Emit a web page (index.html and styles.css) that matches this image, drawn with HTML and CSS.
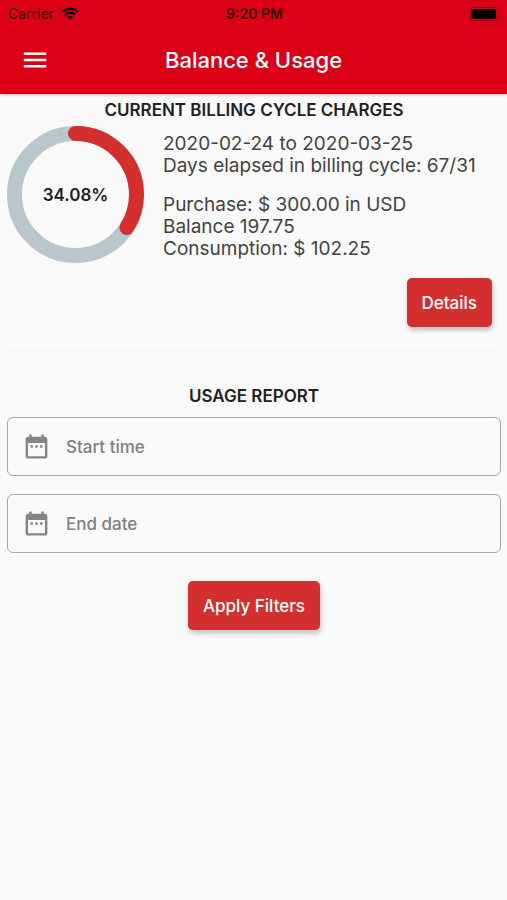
FILE: index.html
```html
<!DOCTYPE html>
<html lang="en">
<head>
    <meta charset="UTF-8">
    <meta name="viewport" content="width=device-width, initial-scale=1.0">
    <title>Balance &amp; Usage</title>
    <link rel="stylesheet" href="styles.css">
</head>
<body>
    <header class="header">
        <div class="status-bar">
            <div class="carrier">
                <span>Carrier</span>
                <svg width="18" height="13" viewBox="0 0 17 12" fill="none" stroke="#1a0003" stroke-width="2.3">
                    <path d="M1 4.6a10.6 10.6 0 0 1 15 0"/>
                    <path d="M3.7 7.3a6.8 6.8 0 0 1 9.6 0"/>
                    <path d="M8.5 12L5.8 9.3a3.8 3.8 0 0 1 5.4 0z" fill="#1a0003" stroke="none"/>
                </svg>
            </div>
            <span class="time">9:20 PM</span>
            <div class="battery">
                <svg width="32" height="14" viewBox="0 0 32 14">
                    <rect x="0.5" y="0.5" width="28" height="13" rx="3.5" fill="none" stroke="#960010"/>
                    <rect x="2" y="2" width="25" height="10" rx="2" fill="#000"/>
                    <path d="M30 4.5q2 2.5 0 5z" fill="#960010"/>
                </svg>
            </div>
        </div>
        <div class="toolbar">
            <button class="menu" type="button" aria-label="Menu">
                <svg width="30" height="30" viewBox="0 0 24 24" fill="#fff">
                    <path d="M3 18h18v-2H3v2zm0-5h18v-2H3v2zm0-7v2h18V6H3z"/>
                </svg>
            </button>
            <h1>Balance &amp; Usage</h1>
        </div>
    </header>
    <main>
        <section class="billing">
            <h2>CURRENT BILLING CYCLE CHARGES</h2>
            <div class="summary">
                <div class="ring">
                    <svg width="137" height="137" viewBox="0 0 137 137" fill="none" stroke-width="15">
                        <circle cx="68.5" cy="68.5" r="61" stroke="#b8c7cb"/>
                        <circle cx="68.5" cy="68.5" r="61" stroke="#d32f2f" stroke-linecap="round" pathLength="100" stroke-dasharray="34.08 100" transform="rotate(-90 68.5 68.5)"/>
                    </svg>
                    <span class="percent">34.08%</span>
                </div>
                <div class="info">
                    <p>2020-02-24 to 2020-03-25<br>Days elapsed in billing cycle: 67/31</p>
                    <p>Purchase: $ 300.00 in USD<br>Balance 197.75<br>Consumption: $ 102.25</p>
                </div>
            </div>
            <div class="actions">
                <button class="btn" type="button">Details</button>
            </div>
        </section>
        <hr>
        <form class="report">
            <h2>USAGE REPORT</h2>
            <label class="field">
                <svg width="29" height="29" viewBox="0 0 24 24" fill="#858585">
                    <path d="M9 11H7v2h2v-2zm4 0h-2v2h2v-2zm4 0h-2v2h2v-2zm2-7h-1V2h-2v2H8V2H6v2H5c-1.1 0-2 .9-2 2v14c0 1.1.9 2 2 2h14c1.1 0 2-.9 2-2V6c0-1.1-.9-2-2-2zm0 16H5V9h14v11z"/>
                </svg>
                <input type="text" placeholder="Start time" aria-label="Start time">
            </label>
            <label class="field">
                <svg width="29" height="29" viewBox="0 0 24 24" fill="#858585">
                    <path d="M9 11H7v2h2v-2zm4 0h-2v2h2v-2zm4 0h-2v2h2v-2zm2-7h-1V2h-2v2H8V2H6v2H5c-1.1 0-2 .9-2 2v14c0 1.1.9 2 2 2h14c1.1 0 2-.9 2-2V6c0-1.1-.9-2-2-2zm0 16H5V9h14v11z"/>
                </svg>
                <input type="text" placeholder="End date" aria-label="End date">
            </label>
            <button class="btn" type="button">Apply Filters</button>
        </form>
    </main>
</body>
</html>
```
FILE: styles.css
```css
* {
    box-sizing: border-box;
}
body {
    margin: 0;
    min-height: 100vh;
    background: #fafafa;
    color: #212121;
    font-family: Inter, "Liberation Sans", sans-serif;
}
h1, h2, p {
    margin: 0;
}
.header {
    background: #db0015;
    box-shadow: 0 1px 3px rgba(0, 0, 0, 0.25);
}
.status-bar {
    display: grid;
    grid-template-columns: 1fr auto 1fr;
    align-items: center;
    height: 27px;
    padding: 0 6px 0 8px;
    color: #3a0006;
    font-size: 14px;
}
.carrier {
    display: flex;
    align-items: center;
    gap: 7px;
}
.time {
    font-weight: 600;
}
.battery {
    display: flex;
    justify-content: flex-end;
}
.toolbar {
    display: grid;
    grid-template-columns: 30px 1fr 30px;
    align-items: center;
    height: 67px;
    padding: 0 20px 2px;
}
.menu {
    display: flex;
    padding: 0;
    border: 0;
    background: none;
    cursor: pointer;
}
.toolbar h1 {
    color: #fff;
    font-size: 22px;
    font-weight: 500;
    text-align: center;
}
main {
    padding: 6px 6px 24px 7px;
}
h2 {
    font-size: 17px;
    font-weight: 600;
    line-height: 20px;
    text-align: center;
}
.summary {
    display: flex;
    gap: 19px;
    margin-top: 6px;
}
.ring {
    display: grid;
    flex: none;
}
.ring > * {
    grid-area: 1 / 1;
}
.percent {
    place-self: center;
    font-size: 17px;
    font-weight: 600;
}
.info {
    padding-top: 7px;
    color: #424242;
    font-size: 19px;
    line-height: 22px;
}
.info p + p {
    margin-top: 17px;
}
.actions {
    display: flex;
    justify-content: flex-end;
    margin-top: 15px;
    padding-right: 9px;
}
.btn {
    height: 49px;
    padding: 0 15px;
    border: 0;
    border-radius: 5px;
    background: #d32f2f;
    box-shadow: 1px 3px 5px rgba(0, 0, 0, 0.25);
    color: #fff;
    font-family: inherit;
    font-size: 17px;
    font-weight: 500;
    cursor: pointer;
}
hr {
    height: 1px;
    margin: 23px 0 35px;
    border: 0;
    background: #f2f2f2;
}
.report {
    display: flex;
    flex-direction: column;
    align-items: center;
}
.field {
    display: flex;
    align-items: center;
    gap: 15px;
    width: 100%;
    height: 59px;
    margin-bottom: 18px;
    padding: 0 14px;
    border: 1px solid #a6a6a6;
    border-radius: 6px;
}
.report h2 {
    margin-bottom: 11px;
}
.field input {
    flex: 1;
    min-width: 0;
    padding: 0;
    border: 0;
    outline: none;
    background: none;
    color: #212121;
    font-family: inherit;
    font-size: 17px;
    font-weight: 500;
}
.field input::placeholder {
    color: #808080;
    opacity: 1;
}
.report .btn {
    margin-top: 10px;
}
```
